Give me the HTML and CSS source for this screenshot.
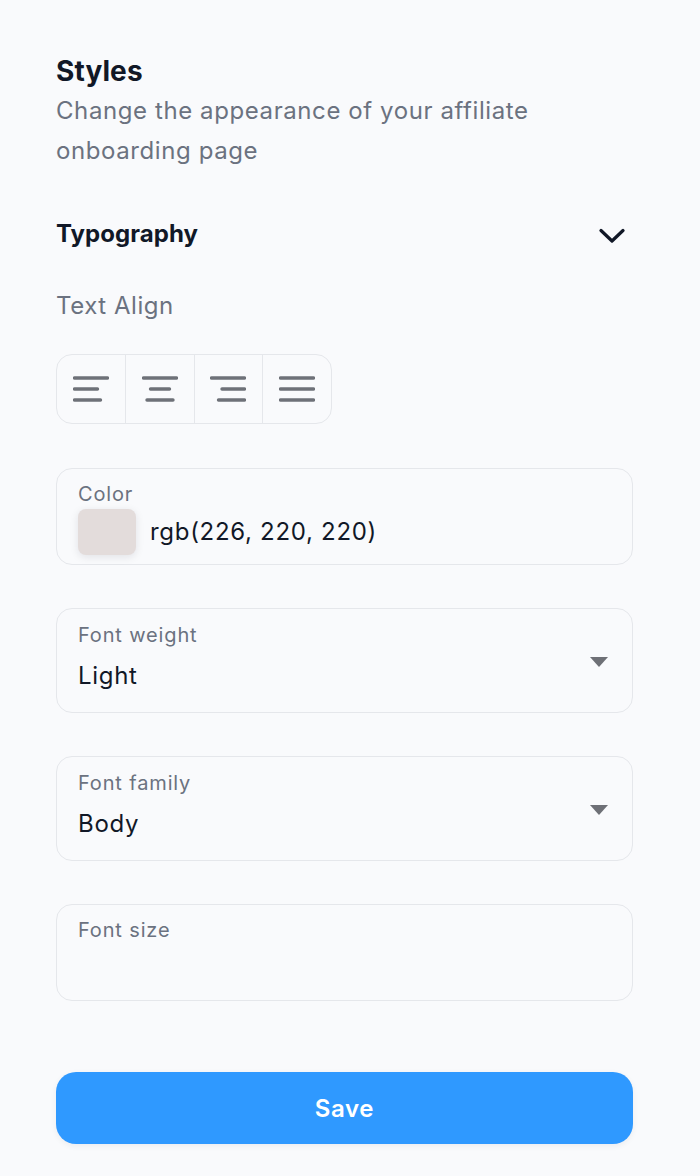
FILE: index.html
```html
<!DOCTYPE html>
<html lang="en">
<head>
<meta charset="utf-8">
<title>Styles</title>
<link rel="stylesheet" href="styles.css">
</head>
<body>
<main class="panel">
  <header class="intro">
    <h1 class="title">Styles</h1>
    <p class="subtitle">Change the appearance of your affiliate onboarding page</p>
  </header>
  <div class="section-head">
    <h2 class="section-title">Typography</h2>
    <svg class="chevron" viewBox="0 0 26 16" width="26" height="16"><path d="M2 2.5 13 13 24 2.5" fill="none" stroke="#111827" stroke-width="3.2" stroke-linecap="round" stroke-linejoin="round"/></svg>
  </div>
  <div class="align-label">Text Align</div>
  <div class="align-group">
    <button class="align-btn"><svg viewBox="0 0 36 26" width="36" height="26"><g stroke="#6e7178" stroke-width="3.4" stroke-linecap="round"><path d="M1.5 2h33M1.5 13h23M1.5 24h26"/></g></svg></button>
    <button class="align-btn"><svg viewBox="0 0 36 26" width="36" height="26"><g stroke="#6e7178" stroke-width="3.4" stroke-linecap="round"><path d="M1.5 2h33M8.5 13h19M5 24h26"/></g></svg></button>
    <button class="align-btn"><svg viewBox="0 0 36 26" width="36" height="26"><g stroke="#6e7178" stroke-width="3.4" stroke-linecap="round"><path d="M1.5 2h33M12 13h22.5M8.500 24h26"/></g></svg></button>
    <button class="align-btn"><svg viewBox="0 0 36 26" width="36" height="26"><g stroke="#6e7178" stroke-width="3.4" stroke-linecap="round"><path d="M1.500 2h33M1.500 13h33M1.500 24h33"/></g></svg></button>
  </div>
  <div class="field field-color">
    <div class="field-label">Color</div>
    <div class="color-row"><span class="swatch"></span><span class="field-value">rgb(226, 220, 220)</span></div>
  </div>
  <div class="field field-select">
    <div class="field-label">Font weight</div>
    <div class="field-value select-value">Light</div>
    <span class="caret"></span>
  </div>
  <div class="field field-select">
    <div class="field-label">Font family</div>
    <div class="field-value select-value">Body</div>
    <span class="caret"></span>
  </div>
  <div class="field field-size">
    <div class="field-label">Font size</div>
  </div>
  <button class="save">Save</button>
</main>
</body>
</html>
```

FILE: styles.css
```css
* { box-sizing: border-box; }
html, body { margin: 0; padding: 0; }
body {
  background: #f9fafc;
  font-family: Inter, "Liberation Sans", sans-serif;
  color: #111827;
  height: 1176px;
  overflow: hidden;
}
.panel { padding: 52px 67px 0 56px; display: flex; flex-direction: column; }
.title {
  margin: 0;
  font-size: 28px;
  line-height: 38px;
  font-weight: 700;
  letter-spacing: 0.1px;
  color: #111827;
}
.subtitle {
  margin: 1px 0 0;
  font-size: 24px;
  line-height: 40px;
  font-weight: 400;
  letter-spacing: 0.59px;
  color: #6b7280;
  max-width: 520px;
}
.section-head {
  margin-top: 43px;
  height: 38px;
  display: flex;
  align-items: center;
  justify-content: space-between;
}
.section-title {
  margin: 0;
  font-size: 24px;
  font-weight: 700;
  letter-spacing: 0.05px;
  color: #111827;
}
.chevron { margin-right: 8px; margin-top: 5px; }
.align-label {
  margin-top: 36px;
  font-size: 24px;
  line-height: 36px;
  letter-spacing: 0.55px;
  color: #6b7280;
}
.align-group {
  margin-top: 30px;
  width: 276px;
  height: 70px;
  display: flex;
  border: 1px solid #e5e7eb;
  border-radius: 16px;
}
.align-btn {
  flex: 1;
  padding: 0;
  background: transparent;
  border: 0;
  border-right: 1px solid #e5e7eb;
  display: flex;
  align-items: center;
  justify-content: center;
}
.align-btn:last-child { border-right: 0; }
.field {
  position: relative;
  margin-top: 43px;
  border: 1px solid #e5e7eb;
  border-radius: 16px;
  padding: 12px 21px 0;
}
.field-color { height: 97px; margin-top: 44px; padding-top: 11px; }
.field-select { height: 105px; }
.field-size { height: 97px; padding-top: 11px; }
.field-label {
  font-size: 20px;
  line-height: 28px;
  letter-spacing: 0.85px;
  color: #6b7280;
}
.field-value {
  font-size: 24px;
  line-height: 36px;
  letter-spacing: 0.7px;
  color: #111827;
}
.select-value { margin-top: 9px; }
.color-row { display: flex; align-items: center; gap: 14px; margin-top: 1px; }
.swatch {
  width: 58px;
  height: 46px;
  border-radius: 8px;
  background: #e3dcdb;
  box-shadow: 0 2px 8px rgba(17, 24, 39, 0.1);
}
.caret {
  position: absolute;
  right: 24px;
  top: 48px;
  width: 0;
  height: 0;
  border-left: 9px solid transparent;
  border-right: 9px solid transparent;
  border-top: 10px solid #6e7076;
}
.save {
  margin-top: 71px;
  height: 72px;
  width: 100%;
  border: 0;
  border-radius: 20px;
  background: #2f99ff;
  color: #fff;
  font-family: Inter, sans-serif;
  font-size: 24px;
  font-weight: 600;
  letter-spacing: 0.65px;
  box-shadow: 0 2px 6px rgba(17, 24, 39, 0.06);
}
```
